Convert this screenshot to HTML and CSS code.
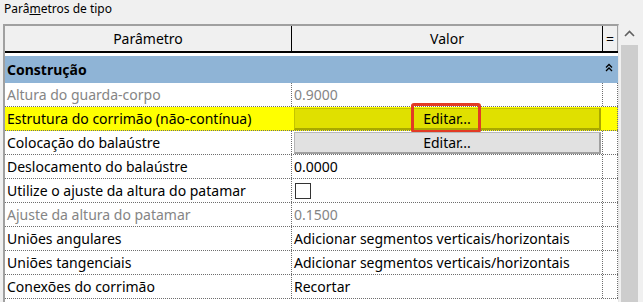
FILE: index.html
```html
<!DOCTYPE html>
<html>
<head>
<meta charset="utf-8">
<link rel="stylesheet" href="styles.css">
</head>
<body>
<div class="title">Parâ<span class="ak">m</span>etros de tipo</div>
<div class="panel">
  <div class="grid">
    <div class="head">
      <div class="hc c1">Parâmetro</div>
      <div class="hc c2">Valor</div>
      <div class="hc c3">=</div>
    </div>
    <div class="gap"></div>
    <div class="group">
      <div class="gname">Construção</div>
      <svg class="collapse" width="8" height="9" viewBox="0 0 8 9"><path d="M1 4.5 L4 1.5 L7 4.5 M1 8 L4 5 L7 8" fill="none" stroke="#000" stroke-width="1.3"/></svg>
    </div>
    <div class="row dis"><div class="c c1">Altura do guarda-corpo</div><div class="c c2">0.9000</div><div class="c c3"></div></div>
    <div class="row sel"><div class="c c1">Estrutura do corrimão (não-contínua)</div><div class="c c2 btncell"><div class="btn ybtn">Editar...</div><div class="hl"></div></div><div class="c c3"></div></div>
    <div class="row"><div class="c c1">Colocação do balaústre</div><div class="c c2 btncell"><div class="btn gbtn">Editar...</div></div><div class="c c3"></div></div>
    <div class="row"><div class="c c1">Deslocamento do balaústre</div><div class="c c2">0.0000</div><div class="c c3"></div></div>
    <div class="row"><div class="c c1">Utilize o ajuste da altura do patamar</div><div class="c c2"><span class="chk"></span></div><div class="c c3"></div></div>
    <div class="row dis"><div class="c c1">Ajuste da altura do patamar</div><div class="c c2">0.1500</div><div class="c c3"></div></div>
    <div class="row"><div class="c c1">Uniões angulares</div><div class="c c2">Adicionar segmentos verticais/horizontais</div><div class="c c3"></div></div>
    <div class="row"><div class="c c1">Uniões tangenciais</div><div class="c c2">Adicionar segmentos verticais/horizontais</div><div class="c c3"></div></div>
    <div class="row"><div class="c c1">Conexões do corrimão</div><div class="c c2">Recortar</div><div class="c c3"></div></div>
  </div>
  <div class="sb">
    <svg class="up" width="11" height="7" viewBox="0 0 11 7"><path d="M1 6 L5.5 1.5 L10 6" fill="none" stroke="#606060" stroke-width="1.6"/></svg>
    <div class="thumb"></div>
  </div>
</div>
</body>
</html>
```

FILE: styles.css
```css
html, body {
  margin: 0;
  padding: 0;
  background: #f0f0f0;
  font-family: "Noto Sans", "Open Sans", sans-serif;
  font-size: 14px;
  color: #000;
  overflow: hidden;
}
.title {
  height: 24px;
  padding-left: 4px;
  font-size: 12px;
  line-height: 17px;
}
.ak { text-decoration: underline; }
.panel {
  display: flex;
  margin-left: 3px;
  height: 278px;
}
.grid {
  width: 613px;
  border-left: 2px solid #a0a0a0;
  border-top: 2px solid #a0a0a0;
  border-right: 1px solid #e6e6e6;
  background: #fff;
  display: flex;
  flex-direction: column;
}
.head {
  display: flex;
  height: 25px;
  border-bottom: 2px solid #000;
  background: #f0f0f0;
}
.hc {
  display: flex;
  align-items: center;
  justify-content: center;
  border-right: 1px solid #000;
}
.hc.c3 { border-right: 1px solid #a0a0a0; }
.c1 { width: 286px; }
.c2 { width: 310px; }
.c3 { width: 14px; }
.gap { height: 3px; }
.group {
  height: 27px;
  background: #8fb4d6;
  display: flex;
  align-items: center;
  justify-content: space-between;
  padding: 0 5px 0 2px;
}
.gname { font-weight: bold; }
.collapse { margin-top: -4px; }
.row {
  display: flex;
  height: 23px;
  border-bottom: 1px dotted #6e6e6e;
}
.c {
  border-right: 1px dotted #6e6e6e;
  display: flex;
  align-items: center;
  padding-left: 2px;
  white-space: nowrap;
}
.c.c1 { width: 284px; }
.c.c2 { width: 308px; }
.c.c3 { width: 12px; }
.dis .c { color: #858585; }
.sel { background: #ffff00; }
.sel .c { border-right-color: #ffff00; }
.sel .c.c3 { border-right-color: #6e6e6e; }
.btncell {
  position: relative;
  padding-top: 1px;
  align-items: stretch;
}
.btn {
  flex: 1;
  display: flex;
  align-items: center;
  justify-content: center;
  margin-right: 1px;
  box-sizing: border-box;
}
.ybtn {
  background: #e0e000;
  border: 1px solid #c4c400;
  border-right: 2px solid #a8a800;
  border-bottom: 2px solid #a8a800;
}
.gbtn {
  background: #e1e1e1;
  border: 1px solid #b8b8b8;
  border-right: 2px solid #a0a0a0;
  border-bottom: 2px solid #a0a0a0;
}
.hl {
  position: absolute;
  left: 119px;
  top: -4px;
  width: 64px;
  height: 24px;
  border: 3px solid #e23b25;
  border-radius: 3px;
}
.chk {
  display: block;
  width: 14px;
  height: 14px;
  border: 1px solid #333;
  margin-left: 1px;
}
.sb {
  width: 21px;
  display: flex;
  flex-direction: column;
  align-items: center;
}
.up { margin-top: 6px; }
.thumb {
  margin-top: 8px;
  width: 17px;
  flex: 1;
  background: #cdcdcd;
}
```
